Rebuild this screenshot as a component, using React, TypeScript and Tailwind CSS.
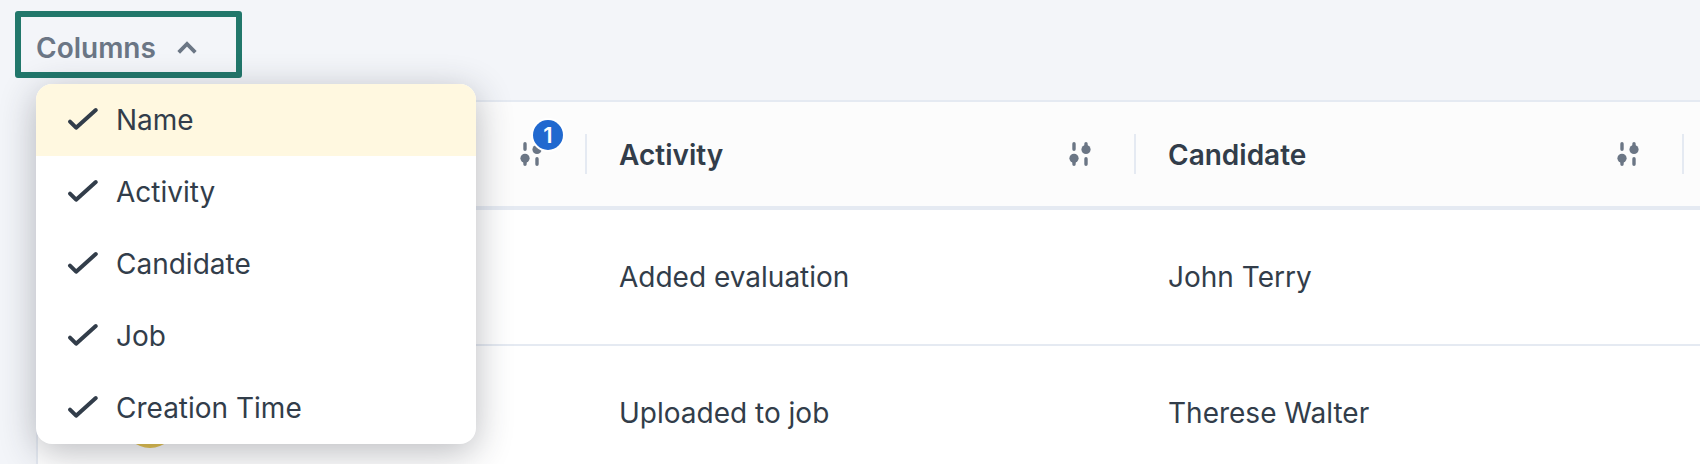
const menuItems = ["Name", "Activity", "Candidate", "Job", "Creation Time"];

const rows = [
  { activity: "Added evaluation", candidate: "John Terry" },
  { activity: "Uploaded to job", candidate: "Therese Walter" },
];

function FilterIcon() {
  return (
    <svg width="24" height="28" viewBox="0 0 24 28" fill="none" stroke="#6b7685" strokeWidth="3.4" strokeLinecap="round">
      <path d="M6 3.7V9.3M6 18v6.3M18 3.7V10M18 18.7v5.6" />
      <circle cx="6" cy="18.3" r="4.6" fill="#6b7685" stroke="none" />
      <circle cx="18" cy="9.5" r="4.6" fill="#6b7685" stroke="none" />
    </svg>
  );
}

function CheckIcon() {
  return (
    <svg width="36" height="28" viewBox="0 0 36 28" fill="none" stroke="#323d4a" strokeWidth="4" strokeLinecap="round" strokeLinejoin="round">
      <path d="M4 15.6l6.1 6.1L29.8 4" />
    </svg>
  );
}

function HeaderCell({ label, badge }: { label: string; badge?: string }) {
  return (
    <div className="flex items-center pl-8">
      <span className="relative top-px flex-1 text-[28px] leading-9 font-semibold">{label}</span>
      <span className="relative mr-[42px] flex">
        <FilterIcon />
        {badge && (
          <span className="absolute -top-[20px] left-[14px] flex size-[30px] items-center justify-center rounded-full bg-[#2169cf] text-[22px] leading-none font-semibold text-white ring-2 ring-white">
            {badge}
          </span>
        )}
      </span>
      <span className="h-10 w-0.5 bg-[#e5eaf2]" />
    </div>
  );
}

export default function App() {
  return (
    <div className="relative h-[464px] w-[1700px] overflow-hidden bg-[#f3f5f9] pt-[11px] font-['Inter',sans-serif] text-[#323d4a]">
      <button className="ml-[15px] flex h-[67px] w-[227px] items-center rounded-[3px] border-6 border-[#21776b] pl-[15px] text-[28px] leading-9 font-semibold text-[#6b7685]">
        <span className="relative top-[3px]">Columns</span>
        <svg className="relative top-[3px] ml-[20px]" width="22" height="16" viewBox="0 0 22 16" fill="none" stroke="#6b7685" strokeWidth="3.8">
          <path d="M2.7 12.3L11 4l8.3 8.3" />
        </svg>
      </button>

      <div className="mt-[22px] ml-9 h-[400px] w-[1800px] border-t-2 border-l-2 border-[#e5eaf2] bg-white">
        <div className="grid h-[108px] grid-cols-[549px_549px_548px_1fr] border-b-4 border-[#e5eaf2] bg-[#fcfcfc]">
          <HeaderCell label="" badge="1" />
          <HeaderCell label="Activity" />
          <HeaderCell label="Candidate" />
        </div>
        {rows.map((row) => (
          <div key={row.candidate} className="grid h-[136px] grid-cols-[549px_549px_548px_1fr] items-center border-b-2 border-[#e5eaf2] text-[28px] leading-9">
            <div className="flex items-center pl-[86px]">
              <span className="relative top-[9px] size-[52px] rounded-full bg-[#e9c64f]" />
            </div>
            <div className="pl-8">{row.activity}</div>
            <div className="pl-8">{row.candidate}</div>
          </div>
        ))}
      </div>

      <ul className="absolute top-[84px] left-9 w-[440px] overflow-hidden rounded-2xl bg-white text-[28px] leading-9 shadow-[0_8px_36px_rgba(40,45,55,0.32)]">
        {menuItems.map((item) => (
          <li key={item} className="flex h-[72px] items-center pl-[30px] first:bg-[#fff8e0]">
            <CheckIcon />
            <span className="ml-[14px]">{item}</span>
          </li>
        ))}
      </ul>
    </div>
  );
}
